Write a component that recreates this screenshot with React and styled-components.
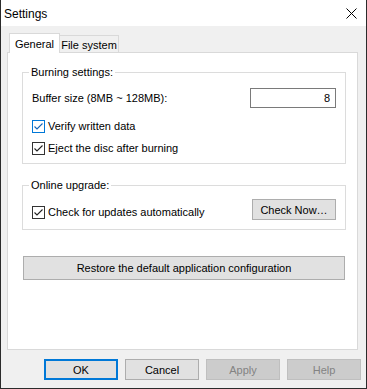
import React from "react";
import styled, { createGlobalStyle, css } from "styled-components";

const Global = createGlobalStyle`
  html, body { margin: 0; padding: 0; background: #fff; }
  body { font-family: "Liberation Sans", Arial, sans-serif; font-size: 11px; color: #000; }
  * { box-sizing: border-box; }
`;

const Window = styled.div`
  width: 367px;
  height: 389px;
  display: flex;
  flex-direction: column;
  background: #f0f0f0;
  border: 1px solid #2b2b2b;
  border-top: none;
`;

const TitleBar = styled.div`
  height: 26px;
  flex: none;
  background: #fff;
  display: flex;
  align-items: center;
  justify-content: space-between;
  padding: 1px 9px 0 3px;
  font-size: 12px;
`;

const Body = styled.div`
  flex: 1;
  display: flex;
  flex-direction: column;
  padding: 7px 5px 0 6px;
`;

const TabStrip = styled.div`
  display: flex;
  align-items: flex-end;
  height: 19px;
  padding-left: 2px;
  position: relative;
  z-index: 1;
`;

const Tab = styled.div`
  display: flex;
  align-items: center;
  justify-content: center;
  border: 1px solid #d9d9d9;
  border-bottom: none;
  ${(p) =>
    p.$active
      ? css`
          width: 51px;
          height: 20px;
          margin-bottom: -1px;
          background: #fff;
        `
      : css`
          width: 60px;
          height: 17px;
          margin-left: -1px;
          padding-top: 2px;
          background: #f0f0f0;
        `}
`;

const Panel = styled.div`
  width: 351px;
  height: 298px;
  background: #fff;
  border: 1px solid #d9d9d9;
  padding: 12px 0 0 14px;
  display: flex;
  flex-direction: column;
`;

const Group = styled.fieldset`
  margin: ${(p) => p.$mt || 0}px 0 0 0;
  padding: 0;
  width: 324px;
  min-width: 0;
  border: 1px solid #dcdcdc;
`;

const Legend = styled.legend`
  margin-left: 6px;
  padding: 0 2px;
  line-height: 14px;
  height: 14px;
  font-size: 11px;
`;

const GroupBody = styled.div`
  padding: ${(p) => p.$pad};
  display: flex;
  flex-direction: column;
`;

const FieldRow = styled.div`
  display: flex;
  align-items: center;
  justify-content: space-between;
  height: 20px;
`;

const NumberInput = styled.input`
  width: 86px;
  height: 20px;
  border: 1px solid #7a7a7a;
  background: #fff;
  text-align: right;
  padding: 0 5px 0 0;
  margin: 0;
  font: 11px "Liberation Sans", Arial, sans-serif;
  color: #000;
  outline: none;
`;

const CheckRow = styled.label`
  display: flex;
  align-items: center;
  gap: 3px;
  height: 13px;
  line-height: 13px;
  margin-top: ${(p) => p.$mt || 0}px;
`;

const Box = styled.span`
  width: 13px;
  height: 13px;
  flex: none;
  border: 1px solid ${(p) => (p.$focus ? "#0078d7" : "#333")};
  background: #fff;
  display: flex;
`;

const SplitRow = styled.div`
  display: flex;
  justify-content: space-between;
  align-items: flex-start;
`;

const Button = styled.button`
  margin: 0;
  padding: 0;
  font: 11px "Liberation Sans", Arial, sans-serif;
  background: #e1e1e1;
  border: 1px solid #adadad;
  color: #000;
  width: ${(p) => p.$w}px;
  height: ${(p) => p.$h}px;
  ${(p) =>
    p.$default &&
    css`
      border: 2px solid #0078d7;
    `}
  ${(p) =>
    p.disabled &&
    css`
      background: #cccccc;
      border-color: #bfbfbf;
      color: #838383;
    `}
`;

const RestoreButton = styled(Button)`
  margin: 26px 0 0 1px;
`;

const ButtonBar = styled.div`
  display: flex;
  justify-content: flex-end;
  gap: 7px;
  margin-top: 9px;
`;

function CheckBox({ focus, children, mt }) {
  const c = focus ? "#1565b8" : "#222";
  return (
    <CheckRow $mt={mt}>
      <Box $focus={focus}>
        <svg width="11" height="11" viewBox="0 0 11 11">
          <path d="M1.5 5.5 L4 8 L9.5 2.5" fill="none" stroke={c} strokeWidth="1.1" />
        </svg>
      </Box>
      <span>{children}</span>
    </CheckRow>
  );
}

export default function App() {
  return (
    <>
      <Global />
      <Window>
        <TitleBar>
          <span>Settings</span>
          <svg width="11" height="11" viewBox="0 0 11 11">
            <path d="M0.5 0.5 L10.5 10.5 M10.5 0.5 L0.5 10.5" stroke="#000" strokeWidth="1" fill="none" />
          </svg>
        </TitleBar>
        <Body>
          <TabStrip>
            <Tab $active>General</Tab>
            <Tab>File system</Tab>
          </TabStrip>
          <Panel>
            <Group>
              <Legend>Burning settings:</Legend>
              <GroupBody $pad="9px 9px 8px 9px">
                <FieldRow>
                  <span>Buffer size (8MB ~ 128MB):</span>
                  <NumberInput readOnly defaultValue="8" />
                </FieldRow>
                <CheckBox focus mt={12}>Verify written data</CheckBox>
                <CheckBox mt={9}>Eject the disc after burning</CheckBox>
              </GroupBody>
            </Group>
            <Group $mt={14}>
              <Legend>Online upgrade:</Legend>
              <GroupBody $pad="7px 9px 9px 9px">
                <SplitRow>
                  <CheckBox mt={7}>Check for updates automatically</CheckBox>
                  <Button $w={84} $h={21}>Check Now…</Button>
                </SplitRow>
              </GroupBody>
            </Group>
            <RestoreButton $w={322} $h={24}>
              Restore the default application configuration
            </RestoreButton>
          </Panel>
          <ButtonBar>
            <Button $w={74} $h={21} $default>OK</Button>
            <Button $w={74} $h={21}>Cancel</Button>
            <Button $w={74} $h={21} disabled>Apply</Button>
            <Button $w={74} $h={21} disabled>Help</Button>
          </ButtonBar>
        </Body>
      </Window>
    </>
  );
}
